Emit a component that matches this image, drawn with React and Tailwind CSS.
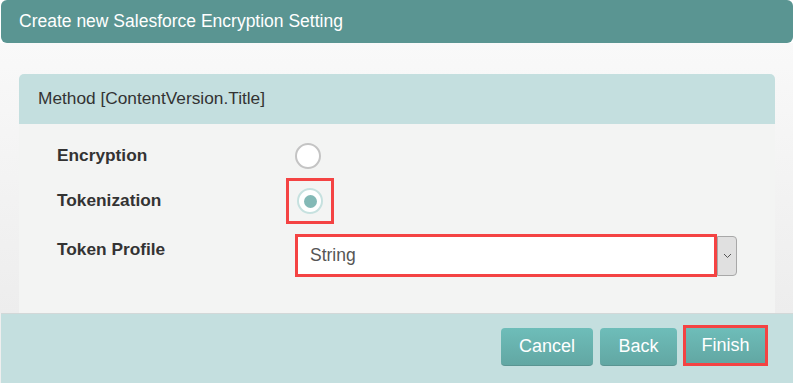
export default function App() {
  return (
    <div className="w-[793px] h-[383px] bg-white overflow-hidden flex flex-col" style={{ fontFamily: '"Liberation Sans", Arial, sans-serif' }}>
      <div className="ml-[1px] h-[43px] bg-[#5a9592] rounded-[6px] flex items-center pl-[18px] text-white text-[17.5px] shrink-0">
        Create new Salesforce Encryption Setting
      </div>
      <div className="flex-1 flex flex-col bg-[#efefef]">
        <div className="flex-1 flex bg-gradient-to-b from-[#f9f9f9] to-[#ededed] pt-[31px] pl-[19px] pr-[18px]">
          <div className="flex-1 flex flex-col">
            <div className="h-[50px] bg-[#c4dfdf] rounded-t-[5px] flex items-center pl-[19px] text-[17.3px] text-[#333]">
              Method [ContentVersion.Title]
            </div>
            <div className="flex-1 bg-[#f3f4f3] pl-[38px] pt-[18px]">
              <div className="flex items-center h-[28px]">
                <div className="w-[229px] text-[17.3px] font-bold text-[#333]">Encryption</div>
                <div className="w-[26px] h-[26px] rounded-full bg-white border-2 border-[#c4c4c4] ml-[9px]"></div>
              </div>
              <div className="flex items-center h-[46px] mt-[8px]">
                <div className="w-[229px] text-[17.3px] font-bold text-[#333]">Tokenization</div>
                <div className="w-[48px] h-[46px] border-[3px] border-[#f44343] flex items-center justify-center">
                  <div className="w-[26px] h-[26px] rounded-full bg-white border-2 border-[#c6e1df] flex items-center justify-center">
                    <div className="w-[13px] h-[13px] rounded-full bg-[#83b9b6]"></div>
                  </div>
                </div>
              </div>
              <div className="flex items-start mt-[10px]">
                <div className="w-[238px] text-[17.3px] font-bold text-[#333] pt-[3px]">Token Profile</div>
                <div className="flex items-center">
                  <div className="w-[422px] h-[43px] border-[3px] border-[#f44343] bg-white flex items-center pl-[12px] text-[17.5px] text-[#555]">
                    String
                  </div>
                  <div className="w-[20px] h-[40px] bg-[#e0e0e0] border border-[#a8a8a8] rounded-r-[4px] flex items-center justify-center">
                    <svg width="9" height="6" viewBox="0 0 9 6"><path d="M1 1l3.5 3.5L8 1" fill="none" stroke="#555" strokeWidth="1"/></svg>
                  </div>
                </div>
              </div>
            </div>
          </div>
        </div>
        <div className="h-[70px] ml-[1px] bg-[#c4dfdf] border-t border-[#d2d8d8] flex items-start justify-end pr-[25px] pt-[11px] shrink-0">
          <button className="mt-[3px] w-[92px] h-[38px] rounded-[4px] bg-gradient-to-b from-[#6ebdb9] to-[#62a7a3] text-white text-[18px] border-b border-[#5a9592]">Cancel</button>
          <button className="mt-[3px] ml-[7px] w-[77px] h-[38px] rounded-[4px] bg-gradient-to-b from-[#6ebdb9] to-[#62a7a3] text-white text-[18px] border-b border-[#5a9592]">Back</button>
          <div className="ml-[6px] w-[85px] h-[41px] border-[3px] border-[#f44343] flex">
            <button className="flex-1 bg-gradient-to-b from-[#6ebdb9] to-[#62a7a3] text-white text-[18px]">Finish</button>
          </div>
        </div>
      </div>
    </div>
  );
}
